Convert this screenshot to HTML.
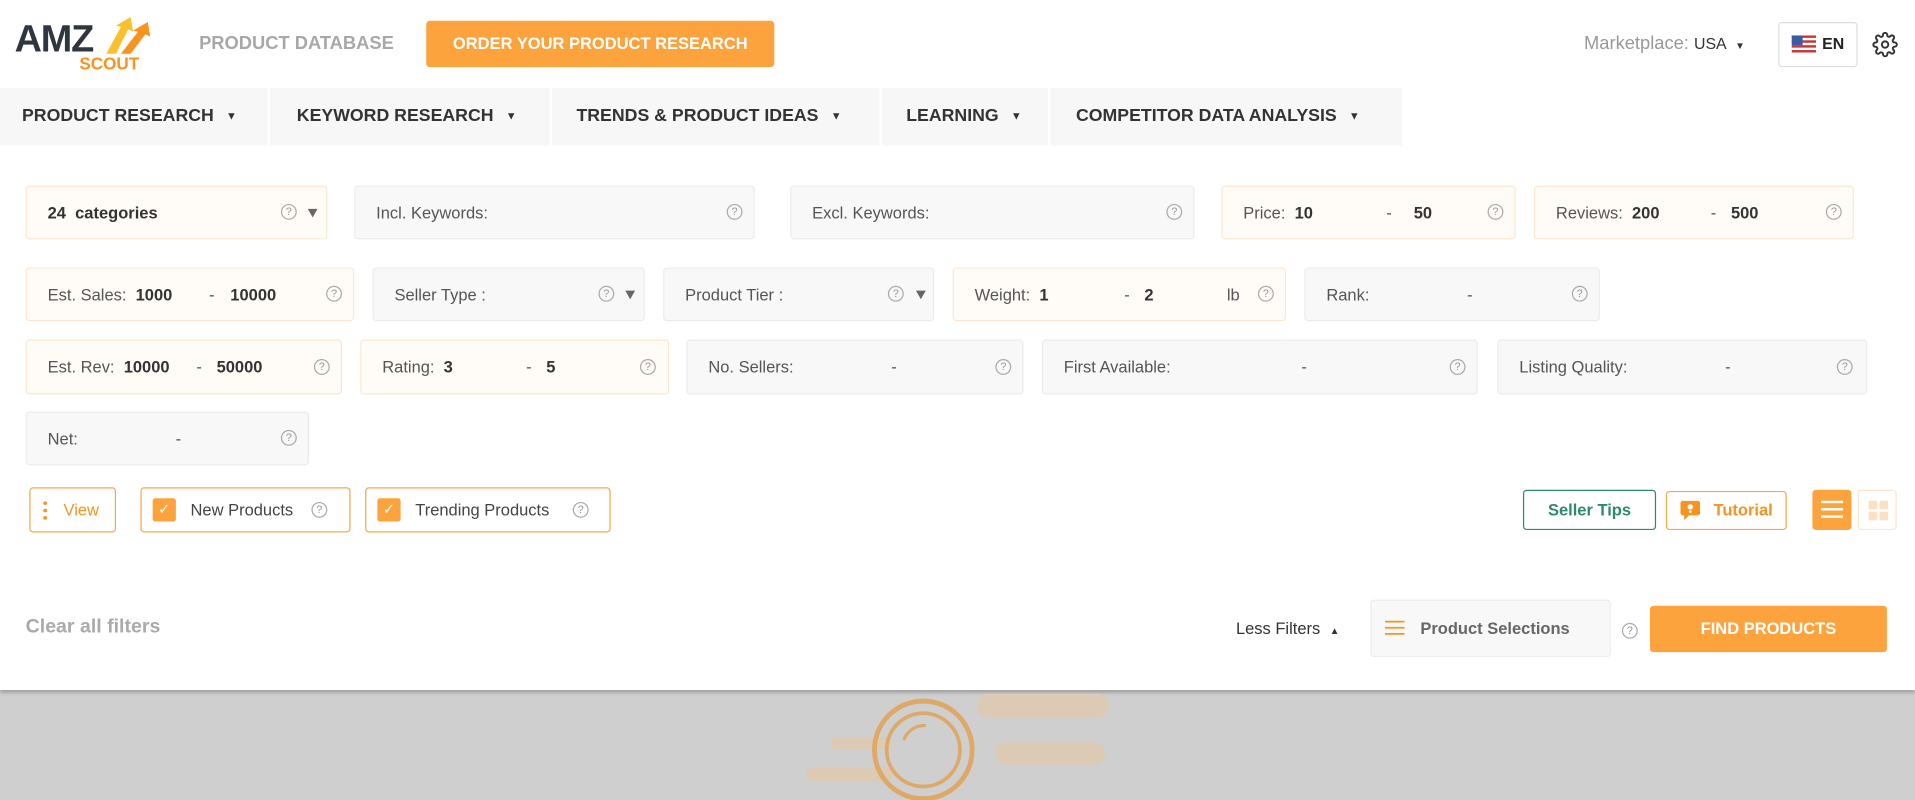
<!DOCTYPE html>
<html><head><meta charset="utf-8"><style>
*{margin:0;padding:0;box-sizing:border-box}
html,body{width:1915px;height:800px;overflow:hidden;background:#cfcfcf;font-family:"Liberation Sans",sans-serif}
#s{position:absolute;left:0;top:0;width:1568px;height:655px;transform:scale(1.22130);transform-origin:0 0}
.a{position:absolute}
.top{left:0;top:0;width:1568px;height:565px;background:#fff;box-shadow:0 2px 3px rgba(0,0,0,.25)}
.nav{top:72px;height:47px;background:#f7f7f7;font-weight:bold;font-size:14.5px;color:#333;line-height:47px;padding-left:18px}
.nav i{font-style:normal;font-size:9px;margin-left:10px;vertical-align:1px}
.f{position:absolute;border:1px solid #ececec;background:#f8f8f8;border-radius:3px;font-size:13.5px;color:#555;display:flex;align-items:center;padding-left:17px}
.t{background:#fffcf8;border-color:#fbe8cf}
.f b{color:#333;font-weight:bold}
.q{position:absolute;width:13px;height:13px;border:1px solid #aaa;border-radius:50%;font-size:9px;line-height:11px;text-align:center;color:#999}
.tri{position:absolute;width:0;height:0;border-left:4px solid transparent;border-right:4px solid transparent;border-top:7px solid #666}
.cb{position:absolute;width:19px;height:19px;background:#fda33d;border-radius:2px;color:#fff;font-size:12px;text-align:center;line-height:19px}
.ob{position:absolute;border:1px solid #f8a847;border-radius:3px;font-size:13.5px;color:#444}
</style></head><body><div id="s">
<div class="a top"></div>
<!-- logo -->
<div class="a" style="left:12px;top:14px;font-weight:bold;font-size:31px;color:#2f3640;letter-spacing:-1px">AMZ</div>
<div class="a" style="left:65px;top:44px;font-weight:bold;font-size:14px;color:#f7931e">SCOUT</div>
<svg class="a" style="left:85px;top:12px" width="52" height="34" viewBox="0 0 52 34"><path d="M2 32 L14 10 L10 9 L22 2 L24 14 L20 12 L10 32Z" fill="#fbc02d"/><path d="M14 32 L28 14 L24 13 L36 6 L38 18 L34 16 L22 32Z" fill="#f7931e"/></svg>
<div class="a" style="left:163px;top:27px;font-weight:bold;font-size:15px;color:#a8a8a8">PRODUCT DATABASE</div>
<div class="a" style="left:349px;top:17px;width:285px;height:38px;background:#fda33d;border-radius:3px;color:#fff;font-weight:bold;font-size:13.5px;line-height:38px;text-align:center">ORDER YOUR PRODUCT RESEARCH</div>
<div class="a" style="left:1297px;top:27px;font-size:15px;color:#999">Marketplace: <span style="font-size:13px;color:#333">USA <span style="font-size:8px;margin-left:4px">▼</span></span></div>
<div class="a" style="left:1456px;top:18px;width:65px;height:37px;border:1px solid #ddd;border-radius:3px;background:#fff"></div>
<svg class="a" style="left:1467px;top:29px" width="20" height="14"><rect width="20" height="14" fill="#fff"/><g fill="#c33"><rect y="0" width="20" height="2"/><rect y="4" width="20" height="2"/><rect y="8" width="20" height="2"/><rect y="12" width="20" height="2"/></g><rect width="9" height="8" fill="#3b5ba5"/></svg>
<div class="a" style="left:1492px;top:28px;font-weight:bold;font-size:13px;color:#222">EN</div>
<svg class="a" style="left:1533px;top:26px" width="21" height="21" viewBox="0 0 24 24" fill="none" stroke="#333" stroke-width="1.8"><circle cx="12" cy="12" r="3"/><path d="M19.4 15a1.7 1.7 0 0 0 .3 1.8l.1.1a2 2 0 1 1-2.8 2.8l-.1-.1a1.7 1.7 0 0 0-1.8-.3 1.7 1.7 0 0 0-1 1.5V21a2 2 0 1 1-4 0v-.1a1.7 1.7 0 0 0-1.1-1.5 1.7 1.7 0 0 0-1.8.3l-.1.1a2 2 0 1 1-2.8-2.8l.1-.1a1.7 1.7 0 0 0 .3-1.8 1.7 1.7 0 0 0-1.5-1H3a2 2 0 1 1 0-4h.1a1.7 1.7 0 0 0 1.5-1.100 1.7 1.7 0 0 0-.3-1.8l-.1-.1a2 2 0 1 1 2.8-2.8l.1.1a1.7 1.7 0 0 0 1.8.3H9a1.7 1.7 0 0 0 1-1.5V3a2 2 0 1 1 4 0v.1a1.7 1.7 0 0 0 1 1.5 1.7 1.7 0 0 0 1.8-.3l.1-.1a2 2 0 1 1 2.8 2.8l-.1.1a1.7 1.7 0 0 0-.3 1.8V9a1.7 1.7 0 0 0 1.5 1H21a2 2 0 1 1 0 4h-.1a1.7 1.7 0 0 0-1.5 1z"/></svg>
<!-- nav -->
<div class="a nav" style="left:0;width:219px">PRODUCT RESEARCH<i>▼</i></div>
<div class="a nav" style="left:221px;width:229px;padding-left:22px">KEYWORD RESEARCH<i>▼</i></div>
<div class="a nav" style="left:452px;width:268px;padding-left:20px">TRENDS &amp; PRODUCT IDEAS<i>▼</i></div>
<div class="a nav" style="left:722px;width:136px;padding-left:20px">LEARNING<i>▼</i></div>
<div class="a nav" style="left:860px;width:288px;padding-left:21px">COMPETITOR DATA ANALYSIS<i>▼</i></div>
<!-- row1 -->
<div class="f t" style="left:21px;top:152px;width:247px;height:44px"><b>24&nbsp; categories</b></div><div class="q" style="left:230px;top:167px">?</div><div class="tri" style="left:252px;top:171px"></div>
<div class="f" style="left:290px;top:152px;width:328px;height:44px">Incl. Keywords:</div><div class="q" style="left:595px;top:167px">?</div>
<div class="f" style="left:647px;top:152px;width:331px;height:44px">Excl. Keywords:</div><div class="q" style="left:955px;top:167px">?</div>
<div class="f t" style="left:1000px;top:152px;width:241px;height:44px">Price:&nbsp;&nbsp; <b>10</b><span style="margin-left:60px">-</span><b style="margin-left:18px">50</b></div><div class="q" style="left:1218px;top:167px">?</div>
<div class="f t" style="left:1256px;top:152px;width:262px;height:44px">Reviews:&nbsp;&nbsp; <b>200</b><span style="margin-left:42px">-</span><b style="margin-left:12px">500</b></div><div class="q" style="left:1495px;top:167px">?</div>
<!-- row2 -->
<div class="f t" style="left:21px;top:219px;width:269px;height:44px">Est. Sales:&nbsp;&nbsp; <b>1000</b><span style="margin-left:30px">-</span><b style="margin-left:13px">10000</b></div><div class="q" style="left:267px;top:234px">?</div>
<div class="f" style="left:305px;top:219px;width:223px;height:44px">Seller Type :</div><div class="q" style="left:490px;top:234px">?</div><div class="tri" style="left:512px;top:238px"></div>
<div class="f" style="left:543px;top:219px;width:222px;height:44px">Product Tier :</div><div class="q" style="left:727px;top:234px">?</div><div class="tri" style="left:750px;top:238px"></div>
<div class="f t" style="left:780px;top:219px;width:273px;height:44px">Weight:&nbsp;&nbsp; <b>1</b><span style="margin-left:62px">-</span><b style="margin-left:12px">2</b><span style="margin-left:60px">lb</span></div><div class="q" style="left:1030px;top:234px">?</div>
<div class="f" style="left:1068px;top:219px;width:242px;height:44px">Rank:<span style="margin-left:80px">-</span></div><div class="q" style="left:1287px;top:234px">?</div>
<!-- row3 -->
<div class="f t" style="left:21px;top:278px;width:259px;height:45px">Est. Rev:&nbsp;&nbsp; <b>10000</b><span style="margin-left:22px">-</span><b style="margin-left:12px">50000</b></div><div class="q" style="left:257px;top:294px">?</div>
<div class="f t" style="left:295px;top:278px;width:253px;height:45px">Rating:&nbsp;&nbsp; <b>3</b><span style="margin-left:60px">-</span><b style="margin-left:12px">5</b></div><div class="q" style="left:524px;top:294px">?</div>
<div class="f" style="left:562px;top:278px;width:276px;height:45px">No. Sellers:<span style="margin-left:80px">-</span></div><div class="q" style="left:815px;top:294px">?</div>
<div class="f" style="left:853px;top:278px;width:357px;height:45px">First Available:<span style="margin-left:107px">-</span></div><div class="q" style="left:1187px;top:294px">?</div>
<div class="f" style="left:1226px;top:278px;width:303px;height:45px">Listing Quality:<span style="margin-left:80px">-</span></div><div class="q" style="left:1504px;top:294px">?</div>
<div class="f" style="left:21px;top:337px;width:232px;height:44px">Net:<span style="margin-left:80px">-</span></div><div class="q" style="left:230px;top:352px">?</div>
<!-- row5 -->
<div class="ob" style="left:24px;top:399px;width:71px;height:37px"><svg class="a" style="left:10px;top:10px" width="4" height="16"><circle cx="2" cy="2" r="1.5" fill="#f7931e"/><circle cx="2" cy="8" r="1.5" fill="#f7931e"/><circle cx="2" cy="14" r="1.5" fill="#f7931e"/></svg><span class="a" style="left:27px;top:10px;color:#f7931e">View</span></div>
<div class="ob" style="left:115px;top:399px;width:172px;height:37px"><div class="cb" style="left:9px;top:8px">✓</div><span class="a" style="left:40px;top:10px">New Products</span><div class="q" style="left:139px;top:11px">?</div></div>
<div class="ob" style="left:299px;top:399px;width:201px;height:37px"><div class="cb" style="left:9px;top:8px">✓</div><span class="a" style="left:40px;top:10px">Trending Products</span><div class="q" style="left:169px;top:11px">?</div></div>
<div class="a" style="left:1247px;top:401px;width:109px;height:33px;border:1px solid #2e8b6a;border-radius:3px;color:#2e8b6a;font-weight:bold;font-size:13.5px;text-align:center;line-height:31px">Seller Tips</div>
<div class="a" style="left:1364px;top:402px;width:99px;height:32px;border:1px solid #f8a847;border-radius:3px;color:#f7931e;font-weight:bold;font-size:13.5px;line-height:30px;padding-left:38px">Tutorial</div>
<svg class="a" style="left:1376px;top:410px" width="16" height="16"><rect x="0" y="0" width="16" height="12" rx="2" fill="#f7931e"/><path d="M3 11 L3 16 L8 11Z" fill="#f7931e"/><circle cx="8" cy="5" r="2.2" fill="#fff"/><rect x="7" y="8" width="2" height="2" fill="#fff"/></svg>
<div class="a" style="left:1484px;top:401px;width:32px;height:33px;background:#fda33d;border-radius:3px"><div class="a" style="left:7px;top:9px;width:18px;height:2px;background:#fff"></div><div class="a" style="left:7px;top:15px;width:18px;height:2px;background:#fff"></div><div class="a" style="left:7px;top:21px;width:18px;height:2px;background:#fff"></div></div>
<div class="a" style="left:1521px;top:401px;width:32px;height:33px;border:1px solid #fbe4cc;border-radius:3px"><div class="a" style="left:8px;top:8px;width:7px;height:7px;background:#fde0c2"></div><div class="a" style="left:17px;top:8px;width:7px;height:7px;background:#fde0c2"></div><div class="a" style="left:8px;top:17px;width:7px;height:7px;background:#fde0c2"></div><div class="a" style="left:17px;top:17px;width:7px;height:7px;background:#fde0c2"></div></div>
<!-- bottom -->
<div class="a" style="left:21px;top:505px;font-weight:bold;font-size:16px;color:#aaa">Clear all filters</div>
<div class="a" style="left:1012px;top:507px;font-size:13.5px;color:#333">Less Filters <span style="font-size:8px;margin-left:4px">▲</span></div>
<div class="a" style="left:1122px;top:491px;width:197px;height:47px;background:#f8f8f8;border:1px solid #ececec;border-radius:3px;font-weight:bold;font-size:13.5px;color:#666;line-height:45px;padding-left:40px">Product Selections</div>
<svg class="a" style="left:1134px;top:507px" width="16" height="14"><g stroke="#f7931e" stroke-width="1.5"><line x1="0" y1="2" x2="16" y2="2"/><line x1="0" y1="7" x2="16" y2="7"/><line x1="0" y1="12" x2="16" y2="12"/></g></svg>
<div class="q" style="left:1328px;top:510px">?</div>
<div class="a" style="left:1351px;top:496px;width:194px;height:38px;background:#fda33d;border-radius:3px;color:#fff;font-weight:bold;font-size:13.5px;line-height:38px;text-align:center">FIND PRODUCTS</div>
<!-- loader -->
<svg class="a" style="left:650px;top:566px" width="270" height="89"><g fill="#dccab4"><rect x="150" y="2" width="108" height="20" rx="10"/><rect x="165" y="42" width="90" height="18" rx="9"/><rect x="10" y="62" width="70" height="12" rx="6"/><rect x="30" y="38" width="50" height="10" rx="5"/></g><circle cx="106" cy="48" r="40" fill="none" stroke="#dea866" stroke-width="4"/><circle cx="106" cy="48" r="30" fill="none" stroke="#dea866" stroke-width="3"/><path d="M90 40 A18 18 0 0 1 108 28" fill="none" stroke="#dea866" stroke-width="2.5"/></svg>
</div></body></html>
